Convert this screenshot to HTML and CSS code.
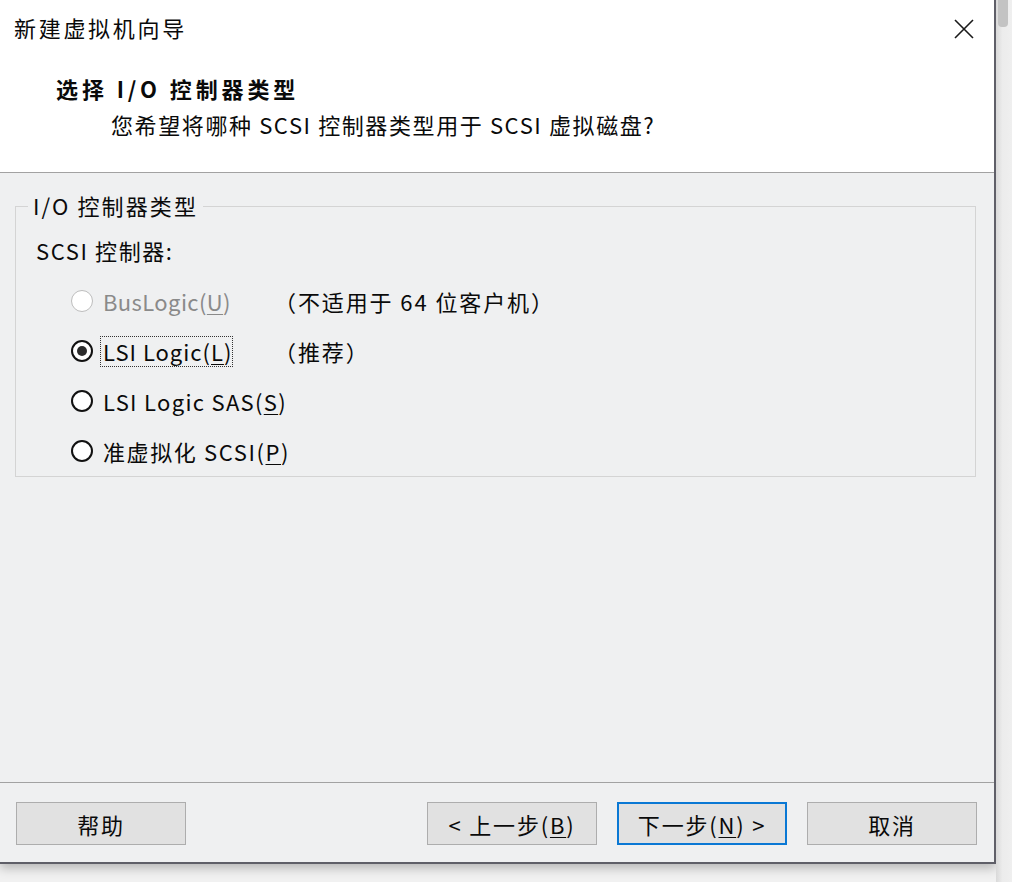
FILE: index.html
```html
<!DOCTYPE html>
<html lang="zh-CN">
<head>
<meta charset="utf-8">
<title>新建虚拟机向导</title>
<link rel="stylesheet" href="styles.css">
</head>
<body>
<div class="screen">
  <div class="window">
    <div class="header">
      <div class="titlebar">
        <span class="title">新建虚拟机向导</span>
        <span class="close" aria-label="关闭">
          <svg width="20" height="20" viewBox="0 0 20 20"><path d="M1 1 L19 19 M19 1 L1 19" stroke="#1a1a1a" stroke-width="1.6" fill="none"/></svg>
        </span>
      </div>
      <div class="heading">选择 I/O 控制器类型</div>
      <div class="subheading">您希望将哪种 SCSI 控制器类型用于 SCSI 虚拟磁盘?</div>
    </div>
    <div class="body">
      <div class="group">
        <span class="group-title">I/O 控制器类型</span>
        <div class="group-label">SCSI 控制器:</div>
        <div class="options">
          <div class="option disabled">
            <span class="radio"></span>
            <span class="opt-label">BusLogic(<u>U</u>)</span>
            <span class="note">（不适用于 64 位客户机）</span>
          </div>
          <div class="option">
            <span class="radio checked"></span>
            <span class="opt-label focused">LSI Logic(<u>L</u>)</span>
            <span class="note">（推荐）</span>
          </div>
          <div class="option">
            <span class="radio"></span>
            <span class="opt-label">LSI Logic SAS(<u>S</u>)</span>
            <span class="note"></span>
          </div>
          <div class="option">
            <span class="radio"></span>
            <span class="opt-label wide">准虚拟化 SCSI(<u>P</u>)</span>
            <span class="note"></span>
          </div>
        </div>
      </div>
    </div>
    <div class="footer">
      <button class="btn">帮助</button>
      <div class="spacer"></div>
      <button class="btn">&lt; 上一步(<u>B</u>)</button>
      <button class="btn primary">下一步(<u>N</u>) &gt;</button>
      <button class="btn">取消</button>
    </div>
  </div>
  <div class="side">
    <div class="thumb"></div>
  </div>
</div>
</body>
</html>
```
FILE: styles.css
```css
* { box-sizing: border-box; }
html, body {
  margin: 0;
  padding: 0;
  width: 1012px;
  height: 882px;
  overflow: hidden;
  background: #f1f1f1;
  font-family: "Noto Sans CJK SC", "Noto Sans", sans-serif;
  color: #0a0a0a;
}
.screen {
  display: flex;
  align-items: flex-start;
  height: 882px;
}
.window {
  width: 996px;
  height: 864px;
  display: flex;
  flex-direction: column;
  background: #eff0f1;
  border-right: 2px solid #5f5f68;
  border-bottom: 2px solid #5f5f68;
  box-shadow: 0 4px 10px rgba(0, 0, 0, 0.25);
}
.side {
  flex: 1;
  height: 882px;
  background: linear-gradient(to right, #d9d9d9, #ececec 40%, #efefef);
  padding-left: 2px;
}
.thumb {
  width: 10px;
  height: 27px;
  background: #c3c3c3;
  border-radius: 0 0 4px 4px;
}
.header {
  height: 173px;
  background: #ffffff;
  border-bottom: 1px solid #a2a2a2;
  display: flex;
  flex-direction: column;
}
.titlebar {
  height: 58px;
  display: flex;
  align-items: center;
  justify-content: space-between;
  padding: 0 20px 0 14px;
}
.title {
  font-size: 22px;
  line-height: 30px;
  letter-spacing: 2.7px;
  margin-top: -5px;
}
.close {
  display: flex;
  width: 20px;
  height: 20px;
}
.heading {
  margin: 15px 0 0 56px;
  font-size: 22px;
  line-height: 30px;
  letter-spacing: 3.9px;
  font-weight: 700;
}
.subheading {
  margin: 6px 0 0 111px;
  font-size: 22px;
  line-height: 30px;
  letter-spacing: 1.6px;
}
.body {
  flex: 1;
  padding: 33px 18px 0 15px;
}
.group {
  position: relative;
  height: 271px;
  border: 1px solid #d4d4d4;
  padding: 28px 0 0 20px;
}
.group-title {
  position: absolute;
  left: 12px;
  top: -17px;
  padding: 0 5px;
  background: #eff0f1;
  font-size: 22px;
  line-height: 30px;
  letter-spacing: 2.1px;
}
.group-label {
  font-size: 22px;
  line-height: 30px;
  letter-spacing: 1.6px;
}
.options {
  margin-top: 11px;
  margin-left: 35px;
  display: grid;
  grid-auto-rows: 50px;
}
.option {
  display: grid;
  grid-template-columns: 22px 184px auto;
  column-gap: 7px;
  align-items: center;
  font-size: 22px;
  letter-spacing: 1.3px;
}
.radio {
  width: 22px;
  height: 22px;
  border: 2px solid #111;
  border-radius: 50%;
  background: #fff;
  display: flex;
  align-items: center;
  justify-content: center;
}
.radio.checked::after {
  content: "";
  width: 10px;
  height: 10px;
  border-radius: 50%;
  background: #2b2b2b;
}
.option.disabled .radio {
  border: 1.5px solid #bdbdbd;
}
.option.disabled .opt-label {
  color: #8a8a8a;
  letter-spacing: 0.4px;
}
.opt-label {
  justify-self: start;
  padding: 0 0 0 2px;
  line-height: 29px;
  white-space: nowrap;
  border: 1px solid transparent;
}
.opt-label.focused {
  border: 1px dotted #333;
  letter-spacing: 1px;
}
.opt-label.wide {
  letter-spacing: 1.6px;
}
.opt-label u, .btn u {
  text-decoration-thickness: 1px;
  text-underline-offset: 3px;
}
.note {
  white-space: nowrap;
  margin-left: -17px;
  letter-spacing: 1.9px;
}
.footer {
  height: 80px;
  border-top: 1px solid #a2a2a2;
  display: flex;
  align-items: flex-start;
  gap: 20px;
  padding: 19px 17px 0 16px;
}
.spacer { flex: 1; }
.btn {
  width: 170px;
  height: 43px;
  background: #e1e1e1;
  border: 1px solid #adadad;
  font-family: inherit;
  font-size: 22px;
  letter-spacing: 1.8px;
  color: #0a0a0a;
  padding: 0;
  margin: 0;
}
.btn.primary {
  border: 2px solid #0a78d4;
}
```
